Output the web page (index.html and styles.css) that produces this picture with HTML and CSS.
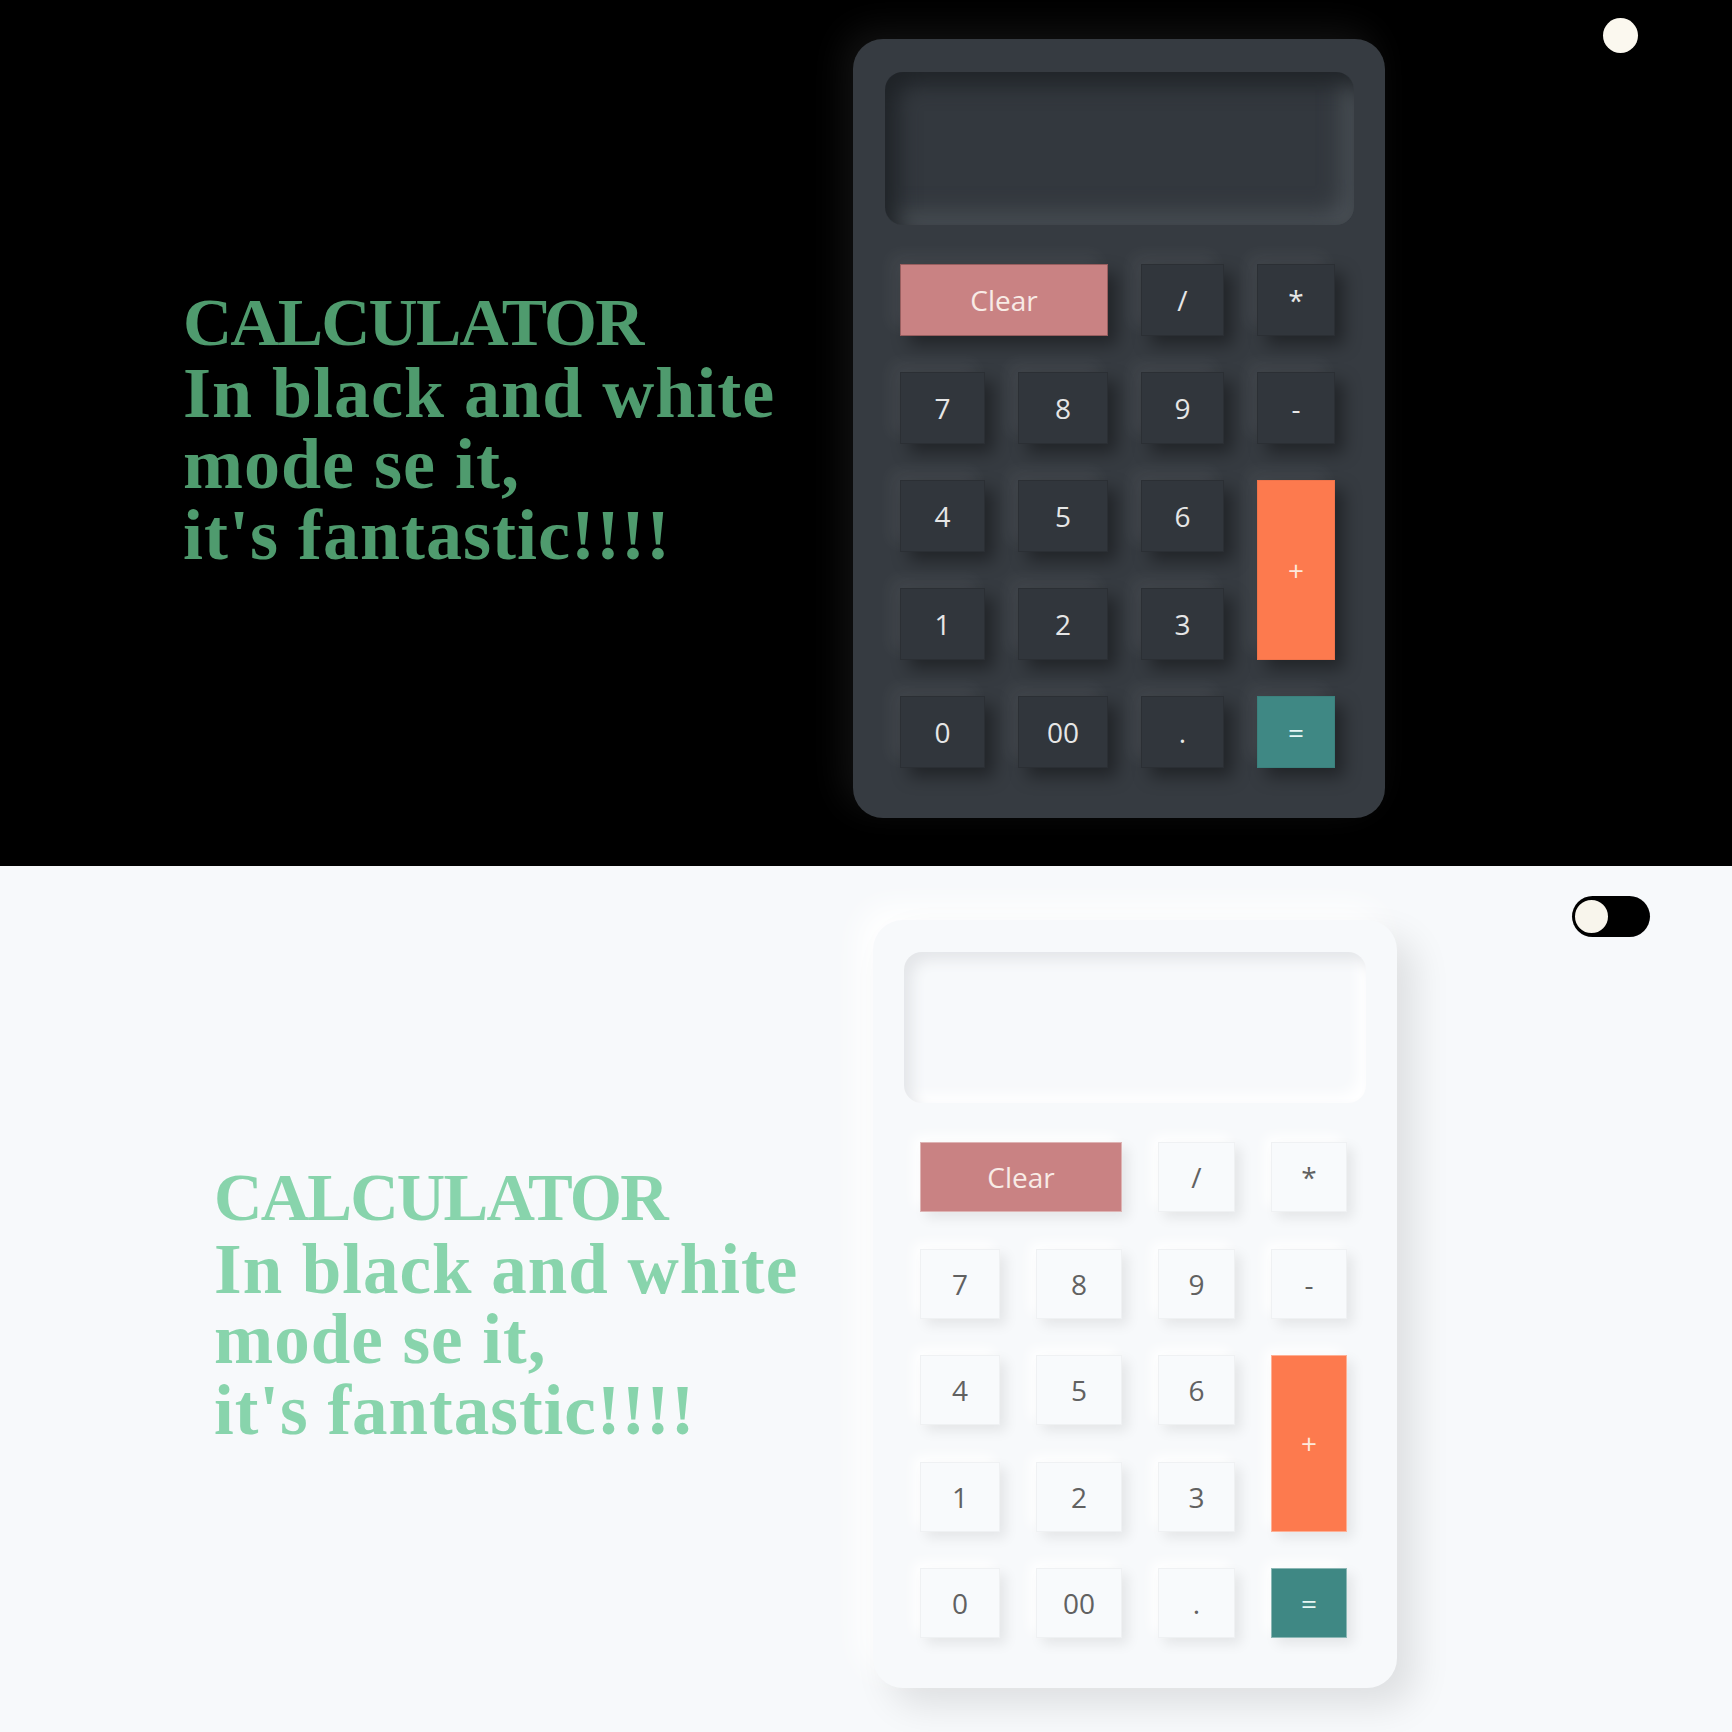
FILE: index.html
```html
<!DOCTYPE html>
<html lang="en">
<head>
<meta charset="utf-8">
<title>Calculator</title>
<link rel="stylesheet" href="styles.css">
</head>
<body>
<section class="panel panel--dark">
  <div class="toggle toggle--on"><span class="toggle__knob"></span></div>
  <h1 class="title">
    <span class="title__line title__line--caps">CALCULATOR</span>
    <span class="title__line">In black and white</span>
    <span class="title__line">mode se it,</span>
    <span class="title__line">it's fantastic!!!!</span>
  </h1>
  <div class="calc">
    <div class="calc__screen"></div>
    <div class="calc__keys">
      <button class="key key--clear">Clear</button>
      <button class="key">/</button>
      <button class="key">*</button>
      <button class="key">7</button>
      <button class="key">8</button>
      <button class="key">9</button>
      <button class="key">-</button>
      <button class="key">4</button>
      <button class="key">5</button>
      <button class="key">6</button>
      <button class="key key--plus">+</button>
      <button class="key">1</button>
      <button class="key">2</button>
      <button class="key">3</button>
      <button class="key">0</button>
      <button class="key">00</button>
      <button class="key">.</button>
      <button class="key key--equals">=</button>
    </div>
  </div>
</section>
<section class="panel panel--light">
  <div class="toggle"><span class="toggle__knob"></span></div>
  <h1 class="title">
    <span class="title__line title__line--caps">CALCULATOR</span>
    <span class="title__line">In black and white</span>
    <span class="title__line">mode se it,</span>
    <span class="title__line">it's fantastic!!!!</span>
  </h1>
  <div class="calc">
    <div class="calc__screen"></div>
    <div class="calc__keys">
      <button class="key key--clear">Clear</button>
      <button class="key">/</button>
      <button class="key">*</button>
      <button class="key">7</button>
      <button class="key">8</button>
      <button class="key">9</button>
      <button class="key">-</button>
      <button class="key">4</button>
      <button class="key">5</button>
      <button class="key">6</button>
      <button class="key key--plus">+</button>
      <button class="key">1</button>
      <button class="key">2</button>
      <button class="key">3</button>
      <button class="key">0</button>
      <button class="key">00</button>
      <button class="key">.</button>
      <button class="key key--equals">=</button>
    </div>
  </div>
</section>
</body>
</html>
```
FILE: styles.css
```css
* { box-sizing: border-box; }

html, body {
  margin: 0;
  padding: 0;
}

body {
  width: 1732px;
  font-family: "Open Sans", "Noto Sans", sans-serif;
}

.panel {
  position: relative;
  height: 866px;
  display: grid;
  align-items: center;
  background: var(--bg);
}

.panel--dark {
  --bg: #000000;
  --title: #4f9b6e;
  --title-size: 72px;
  --title-lh: 71px;
  grid-template-columns: 670px 532px;
  padding: 0 0 9px 183px;
}

.panel--light {
  --bg: #f7f9fb;
  --title: #88d4ac;
  --title-size: 71px;
  --title-lh: 70.5px;
  grid-template-columns: 659px 524px;
  padding: 10px 0 0 214px;
}

/* ---------- heading ---------- */
.title {
  margin: 0;
  font-family: "Liberation Serif", "Times New Roman", serif;
  font-weight: 700;
  font-size: var(--title-size);
  line-height: var(--title-lh);
  color: var(--title);
}

.title__line {
  display: block;
  letter-spacing: 1px;
  white-space: nowrap;
}

.title__line--caps {
  font-size: 0.945em;
  letter-spacing: -1.8px;
}

/* ---------- toggle ---------- */
.toggle {
  position: absolute;
  right: 82px;
  width: 78px;
  height: 41px;
  border-radius: 21px;
  background: #000;
  display: flex;
  align-items: center;
}

.panel--dark .toggle {
  top: 15px;
  justify-content: flex-end;
  padding-right: 12px;
}

.panel--light .toggle {
  top: 30px;
  justify-content: flex-start;
  padding-left: 1px;
}

.toggle__knob {
  display: block;
  border-radius: 50%;
  background: #fbf8ef;
}

.panel--dark .toggle__knob {
  width: 35px;
  height: 35px;
}

.panel--light .toggle__knob {
  width: 37px;
  height: 37px;
  border: 2px solid #000;
  background: #f8f5ec;
}

/* ---------- calculator ---------- */
.calc {
  border-radius: 30px;
}

.panel--dark .calc {
  background: #363b41;
  padding: 33px 31px 50px 32px;
  box-shadow: -10px -10px 35px rgba(255, 255, 255, 0.07),
              12px 12px 30px rgba(0, 0, 0, 0.6);
}

.panel--light .calc {
  background: #f7f9fb;
  padding: 32px 31px 50px 31px;
  box-shadow: 18px 18px 36px rgba(0, 0, 0, 0.1),
              -14px -14px 30px #ffffff;
}

.calc__screen {
  border-radius: 18px;
}

.panel--dark .calc__screen {
  height: 153px;
  background: #33383e;
  box-shadow: inset 12px 12px 22px #1f2327,
              inset -12px -12px 22px #4a5056;
}

.panel--light .calc__screen {
  height: 151px;
  background: #f7f9fb;
  box-shadow: inset 8px 8px 14px #e4e6e9,
              inset -8px -8px 14px #ffffff;
}

.calc__keys {
  display: grid;
  margin-top: 39px;
}

.panel--dark .calc__keys {
  grid-template-columns: 85px 90px 83px 78px;
  grid-auto-rows: 72px;
  column-gap: 33px;
  row-gap: 36px;
  margin-left: 15px;
  margin-right: 19px;
}

.panel--light .calc__keys {
  grid-template-columns: 80px 86px 77px 76px;
  grid-auto-rows: 70px;
  column-gap: 36px;
  row-gap: 36.5px;
  margin-left: 16px;
  margin-right: 19px;
}

.key {
  font-family: "Open Sans", "Noto Sans", sans-serif;
  font-size: 28px;
  font-weight: 400;
  border: 1px solid transparent;
  border-radius: 0;
  padding: 0;
  margin: 0;
  cursor: pointer;
}

.panel--dark .key {
  background: #31363c;
  color: #e6e6e6;
  border-color: rgba(0, 0, 0, 0.12);
  box-shadow: 9px 9px 16px rgba(0, 0, 0, 0.38),
              -9px -9px 16px rgba(255, 255, 255, 0.06);
}

.panel--light .key {
  background: #f8fafc;
  color: #616161;
  border-color: rgba(0, 0, 0, 0.035);
  box-shadow: 6px 6px 12px rgba(0, 0, 0, 0.08),
              -6px -6px 12px #ffffff;
}

.key--clear { grid-column: span 2; }
.key--plus { grid-row: span 2; }

.panel .key--clear {
  background: #c98283;
  color: #f8ebe6;
  border-color: rgba(60, 30, 30, 0.35);
}

.panel .key--plus {
  background: #fd7a4e;
  color: #fde9dc;
  border-color: rgba(0, 0, 0, 0.05);
}

.panel .key--equals {
  background: #3f8884;
  color: #e6f6f4;
  border-color: rgba(0, 0, 0, 0.05);
}

.panel--light .key--clear,
.panel--light .key--plus,
.panel--light .key--equals {
  border-color: rgba(255, 255, 255, 0.4);
}
```
